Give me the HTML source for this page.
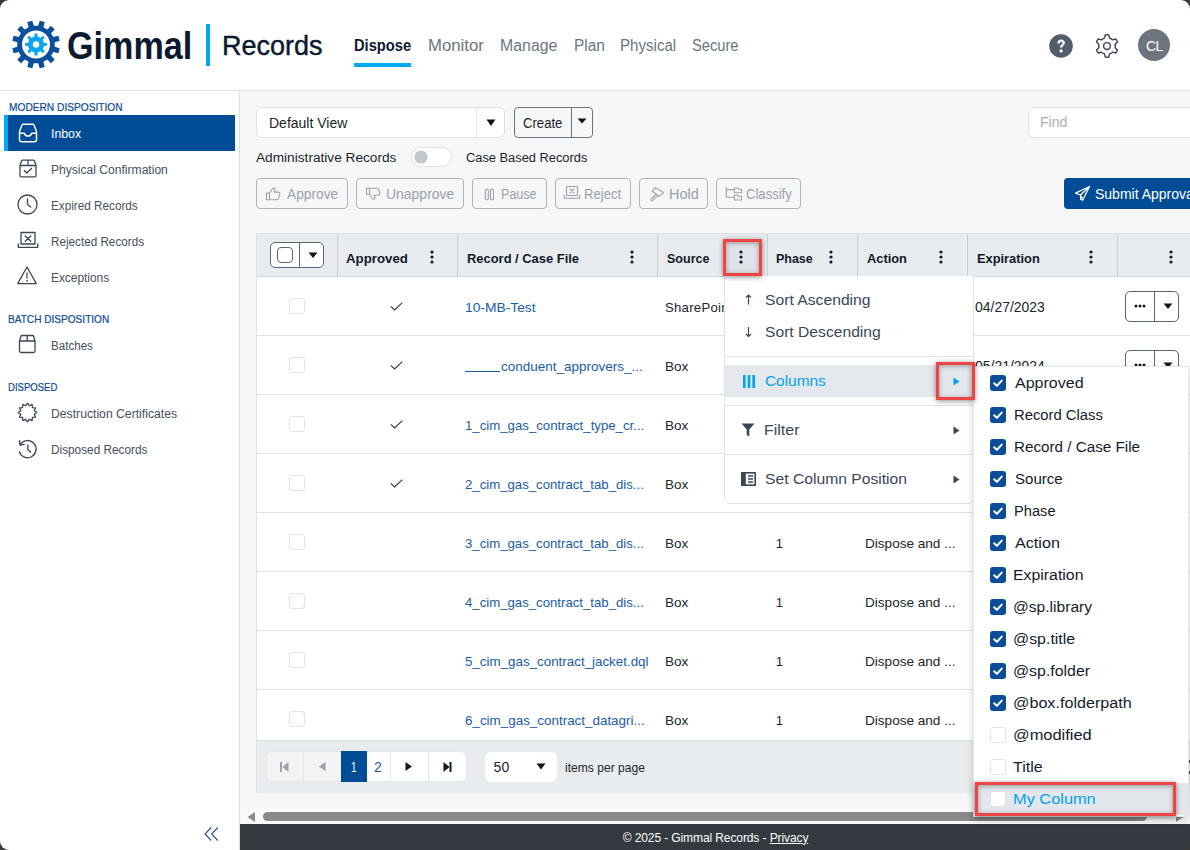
<!DOCTYPE html>
<html><head><meta charset="utf-8">
<style>
*{box-sizing:border-box;margin:0;padding:0}
html,body{width:1190px;height:850px;overflow:hidden;background:#393939;font-family:"Liberation Sans",sans-serif}
#app{position:absolute;left:0;top:0;width:1190px;height:850px;overflow:hidden;border-radius:9px;background:transparent}
.t{position:absolute;white-space:nowrap;line-height:1}
.r{position:absolute;box-sizing:border-box}
</style></head><body><div id="app">
<div class="r" style="left:0px;top:0px;width:1190px;height:824px;background:#fff"></div>
<div class="r" style="left:0px;top:824px;width:240px;height:26px;background:#fff"></div>
<div class="r" style="left:0px;top:90px;width:1190px;height:1px;background:#dde1e6"></div>
<div class="r" style="left:239px;top:91px;width:1px;height:759px;background:#dde1e6"></div>
<div class="r" style="left:240px;top:91px;width:950px;height:733px;background:#f6f7f9"></div>
<div class="r" style="left:240px;top:824px;width:950px;height:26px;background:#343a40"></div>
<svg class="r" style="left:0px;top:0px;" width="80" height="90" viewBox="0 0 80 90"><path d="M54.67,46.71 L59.71,48.19 L58.38,53.16 L53.27,51.92 L51.06,55.75 L54.69,59.55 L51.05,63.19 L47.25,59.56 L43.42,61.77 L44.66,66.88 L39.69,68.21 L38.21,63.17 L33.79,63.17 L32.31,68.21 L27.34,66.88 L28.58,61.77 L24.75,59.56 L20.95,63.19 L17.31,59.55 L20.94,55.75 L18.73,51.92 L13.62,53.16 L12.29,48.19 L17.33,46.71 L17.33,42.29 L12.29,40.81 L13.62,35.84 L18.73,37.08 L20.94,33.25 L17.31,29.45 L20.95,25.81 L24.75,29.44 L28.58,27.23 L27.34,22.12 L32.31,20.79 L33.79,25.83 L38.21,25.83 L39.69,20.79 L44.66,22.12 L43.42,27.23 L47.25,29.44 L51.05,25.81 L54.69,29.45 L51.06,33.25 L53.27,37.08 L58.38,35.84 L59.71,40.81 L54.67,42.29Z" fill="#0a4f9c"/><circle cx="36" cy="44.5" r="14" fill="#fff"/><path d="M44.05,42.93 L46.90,42.99 L46.90,46.01 L44.05,46.07 L42.80,49.08 L44.77,51.14 L42.64,53.27 L40.58,51.30 L37.57,52.55 L37.51,55.40 L34.49,55.40 L34.43,52.55 L31.42,51.30 L29.36,53.27 L27.23,51.14 L29.20,49.08 L27.95,46.07 L25.10,46.01 L25.10,42.99 L27.95,42.93 L29.20,39.92 L27.23,37.86 L29.36,35.73 L31.42,37.70 L34.43,36.45 L34.49,33.60 L37.51,33.60 L37.57,36.45 L40.58,37.70 L42.64,35.73 L44.77,37.86 L42.80,39.92Z M39.2,44.5 A3.2,3.2 0 1,0 32.8,44.5 A3.2,3.2 0 1,0 39.2,44.5Z" fill="#0aa6f0" fill-rule="evenodd"/></svg>
<div class="t " style="left:67.30px;top:26.50px;font-size:38px;color:#0c1a30;font-weight:bold;;transform:scaleX(0.8982);transform-origin:0 0">Gimmal</div>
<div class="r" style="left:206px;top:24px;width:4px;height:42px;background:#00a9f4"></div>
<div class="t " style="left:221.50px;top:33.00px;font-size:27px;color:#0c1a30;font-weight:normal;-webkit-text-stroke:0.45px #0c1a30;transform:scaleX(0.9996);transform-origin:0 0">Records</div>
<div class="t " style="left:353.98px;top:37.70px;font-size:16px;color:#0c1a30;font-weight:bold;;transform:scaleX(0.9178);transform-origin:0 0">Dispose</div>
<div class="r" style="left:354px;top:63px;width:57px;height:4px;background:#00a9f4"></div>
<div class="t " style="left:427.55px;top:37.70px;font-size:16px;color:#6c757d;font-weight:normal;;transform:scaleX(1.0467);transform-origin:0 0">Monitor</div>
<div class="t " style="left:500.31px;top:37.70px;font-size:16px;color:#6c757d;font-weight:normal;;transform:scaleX(0.9926);transform-origin:0 0">Manage</div>
<div class="t " style="left:573.74px;top:37.70px;font-size:16px;color:#6c757d;font-weight:normal;;transform:scaleX(0.9627);transform-origin:0 0">Plan</div>
<div class="t " style="left:619.66px;top:37.70px;font-size:16px;color:#6c757d;font-weight:normal;;transform:scaleX(0.9427);transform-origin:0 0">Physical</div>
<div class="t " style="left:692.30px;top:37.70px;font-size:16px;color:#6c757d;font-weight:normal;;transform:scaleX(0.9174);transform-origin:0 0">Secure</div>
<svg class="r" style="left:1049px;top:34px;" width="24" height="24" viewBox="0 0 24 24"><circle cx="12" cy="12" r="11.8" fill="#535c6b"/><path d="M8.3,9.6 C8.3,6.9 10,5.6 12.1,5.6 C14.3,5.6 15.9,7 15.9,9 C15.9,11.2 13.3,11.6 13.3,13.6 L10.9,13.6 C10.9,10.9 13.4,10.7 13.4,9.1 C13.4,8.3 12.9,7.8 12.1,7.8 C11.2,7.8 10.8,8.5 10.8,9.6Z" fill="#fff"/><circle cx="12.1" cy="16.9" r="1.6" fill="#fff"/></svg>
<svg class="r" style="left:1094px;top:33px;" width="26" height="26" viewBox="0 0 26 26"><path d="M10.44,5.11 L11.25,1.94 A11.2,11.2 0 0,1 14.75,1.94 L15.56,5.11 A8.3,8.3 0 0,1 18.55,6.83 L21.70,5.95 A11.2,11.2 0 0,1 23.46,8.99 L21.12,11.27 A8.3,8.3 0 0,1 21.12,14.73 L23.46,17.01 A11.2,11.2 0 0,1 21.70,20.05 L18.55,19.17 A8.3,8.3 0 0,1 15.56,20.89 L14.75,24.06 A11.2,11.2 0 0,1 11.25,24.06 L10.44,20.89 A8.3,8.3 0 0,1 7.45,19.17 L4.30,20.05 A11.2,11.2 0 0,1 2.54,17.01 L4.88,14.73 A8.3,8.3 0 0,1 4.88,11.27 L2.54,8.99 A11.2,11.2 0 0,1 4.30,5.95 L7.45,6.83 A8.3,8.3 0 0,1 10.44,5.11 Z" fill="none" stroke="#3d4756" stroke-width="1.45" stroke-linejoin="round"/><circle cx="13" cy="13" r="3.4" fill="none" stroke="#3d4756" stroke-width="1.45"/></svg>
<div class="r" style="left:1138px;top:29px;width:32px;height:32px;background:#6c757d;border-radius:50%"></div>
<div class="t " style="left:1146.00px;top:38.60px;font-size:14px;color:#fff;font-weight:normal;letter-spacing:-0.5px">CL</div>
<div class="t " style="left:8.90px;top:101.60px;font-size:10.6px;color:#0d4a96;font-weight:normal;-webkit-text-stroke:0.2px #0d4a96;transform:scaleX(0.9604);transform-origin:0 0">MODERN DISPOSITION</div>
<div class="r" style="left:4px;top:115px;width:231px;height:36px;background:#004c97"></div>
<div class="r" style="left:4px;top:115px;width:4px;height:36px;background:#00a9f4"></div>
<div class="t " style="left:51.40px;top:127.85px;font-size:12.3px;color:#fff;font-weight:normal;;transform:scaleX(0.9989);transform-origin:0 0">Inbox</div>
<div class="t " style="left:51.42px;top:163.85px;font-size:12.3px;color:#46505e;font-weight:normal;;transform:scaleX(0.9824);transform-origin:0 0">Physical Confirmation</div>
<div class="t " style="left:51.45px;top:199.85px;font-size:12.3px;color:#46505e;font-weight:normal;;transform:scaleX(0.9537);transform-origin:0 0">Expired Records</div>
<div class="t " style="left:51.45px;top:235.85px;font-size:12.3px;color:#46505e;font-weight:normal;;transform:scaleX(0.9514);transform-origin:0 0">Rejected Records</div>
<div class="t " style="left:51.43px;top:271.85px;font-size:12.3px;color:#46505e;font-weight:normal;;transform:scaleX(0.9661);transform-origin:0 0">Exceptions</div>
<div class="t " style="left:8.40px;top:313.70px;font-size:10.6px;color:#0d4a96;font-weight:normal;-webkit-text-stroke:0.2px #0d4a96;transform:scaleX(0.9518);transform-origin:0 0">BATCH DISPOSITION</div>
<div class="t " style="left:51.46px;top:339.65px;font-size:12.3px;color:#46505e;font-weight:normal;;transform:scaleX(0.9426);transform-origin:0 0">Batches</div>
<div class="t " style="left:8.40px;top:381.70px;font-size:10.6px;color:#0d4a96;font-weight:normal;-webkit-text-stroke:0.2px #0d4a96;transform:scaleX(0.9002);transform-origin:0 0">DISPOSED</div>
<div class="t " style="left:51.41px;top:407.65px;font-size:12.3px;color:#46505e;font-weight:normal;;transform:scaleX(0.9916);transform-origin:0 0">Destruction Certificates</div>
<div class="t " style="left:51.44px;top:443.85px;font-size:12.3px;color:#46505e;font-weight:normal;;transform:scaleX(0.9595);transform-origin:0 0">Disposed Records</div>
<svg class="r" style="left:17px;top:123px;" width="22" height="20" viewBox="0 0 22 20"><path d="M2.5,8.5 L5,2 Q5.3,1.3 6,1.3 L16,1.3 Q16.7,1.3 17,2 L19.5,8.5 L19.5,17 Q19.5,18.7 17.8,18.7 L4.2,18.7 Q2.5,18.7 2.5,17Z M2.5,10.2 L7.3,10.2 Q8,13 11,13 Q14,13 14.7,10.2 L19.5,10.2" fill="none" stroke="#fff" stroke-width="1.5" stroke-linecap="round" stroke-linejoin="round"/></svg>
<svg class="r" style="left:18px;top:159px;" width="20" height="19" viewBox="0 0 20 19"><path d="M2,6.5 L2,16.5 Q2,17.8 3.3,17.8 L16.7,17.8 Q18,17.8 18,16.5 L18,6.5 Z M2,6.5 L3.5,2 Q3.8,1.2 4.6,1.2 L15.4,1.2 Q16.2,1.2 16.5,2 L18,6.5 M10,1.2 L10,6.5 M6.3,11.5 L8.8,14 L13.7,9.2" fill="none" stroke="#3d4756" stroke-width="1.3" stroke-linecap="round" stroke-linejoin="round"/></svg>
<svg class="r" style="left:17.3px;top:193.8px;" width="21" height="21" viewBox="0 0 21 21"><circle cx="10.5" cy="10.5" r="9.5" fill="none" stroke="#3d4756" stroke-width="1.3" stroke-linecap="round" stroke-linejoin="round"/><path d="M10.5,4.8 L10.5,10.5 L13.8,13" fill="none" stroke="#3d4756" stroke-width="1.3" stroke-linecap="round" stroke-linejoin="round"/></svg>
<svg class="r" style="left:15.5px;top:231px;" width="24" height="18" viewBox="0 0 24 18"><path d="M5,1.5 L19,1.5 L19,13 L5,13 Z M2.3,13 L2.3,16.3 L21.7,16.3 L21.7,13 M9.2,5 L14.8,10.2 M14.8,5 L9.2,10.2" fill="none" stroke="#3d4756" stroke-width="1.3" stroke-linecap="round" stroke-linejoin="round"/></svg>
<svg class="r" style="left:16px;top:265px;" width="22" height="21" viewBox="0 0 22 21"><path d="M11,2 L20.3,18.6 L1.7,18.6 Z" fill="none" stroke="#3d4756" stroke-width="1.3" stroke-linecap="round" stroke-linejoin="round"/><path d="M11,8 L11,13" fill="none" stroke="#3d4756" stroke-width="1.3" stroke-linecap="round" stroke-linejoin="round"/><circle cx="11" cy="15.8" r="0.9" fill="#3d4756"/></svg>
<svg class="r" style="left:17px;top:334px;" width="22" height="20" viewBox="0 0 22 20"><path d="M2.5,7 L2.5,17 Q2.5,18.5 4,18.5 L16.5,18.5 Q18,18.5 18,17 L18,7 Z M2.5,7 L3.8,2.5 Q4.1,1.5 5,1.5 L15.5,1.5 Q16.4,1.5 16.7,2.5 L18,7 M10.25,1.5 L10.25,7" fill="none" stroke="#3d4756" stroke-width="1.3" stroke-linecap="round" stroke-linejoin="round"/></svg>
<svg class="r" style="left:17px;top:402px;" width="21" height="21" viewBox="0 0 21 21"><path d="M10.50,1.20 L12.31,3.74 L15.15,2.45 L15.45,5.55 L18.55,5.85 L17.26,8.69 L19.80,10.50 L17.26,12.31 L18.55,15.15 L15.45,15.45 L15.15,18.55 L12.31,17.26 L10.50,19.80 L8.69,17.26 L5.85,18.55 L5.55,15.45 L2.45,15.15 L3.74,12.31 L1.20,10.50 L3.74,8.69 L2.45,5.85 L5.55,5.55 L5.85,2.45 L8.69,3.74Z" fill="none" stroke="#3d4756" stroke-width="1.3" stroke-linecap="round" stroke-linejoin="round"/></svg>
<svg class="r" style="left:16px;top:438px;" width="22" height="22" viewBox="0 0 22 22"><path d="M4.2,6.5 A8.6,8.6 0 1,1 3.3,13.8" fill="none" stroke="#3d4756" stroke-width="1.3" stroke-linecap="round" stroke-linejoin="round"/><path d="M3.6,2.6 L3.9,7 L8.2,6.4" fill="none" stroke="#3d4756" stroke-width="1.3" stroke-linecap="round" stroke-linejoin="round"/><path d="M11.8,7 L11.8,11.5 L14.5,14" fill="none" stroke="#3d4756" stroke-width="1.3" stroke-linecap="round" stroke-linejoin="round"/></svg>
<svg class="r" style="left:203px;top:826px;" width="17" height="16" viewBox="0 0 17 16"><path d="M8.2,1.5 L2,8 L8.2,14.5 M14.8,1.5 L8.6,8 L14.8,14.5" fill="none" stroke="#2f4f86" stroke-width="1.1"/></svg>
<div class="r" style="left:256px;top:107px;width:249px;height:31px;background:#fff;border:1px solid #dee2e6;border-radius:6px"></div>
<div class="r" style="left:476px;top:108px;width:1px;height:29px;background:#e3e6ea"></div>
<svg class="r" style="left:486px;top:119px;" width="10" height="8" viewBox="0 0 10 8"><path d="M0.5,0.5 L9.5,0.5 L5,7Z" fill="#0c1420"/></svg>
<div class="t " style="left:268.79px;top:117.10px;font-size:13.8px;color:#212529;font-weight:normal;;transform:scaleX(1.0139);transform-origin:0 0">Default View</div>
<div class="r" style="left:514px;top:107px;width:79px;height:31px;border:1px solid #6c757d;border-radius:4px;background:#f6f7f9"></div>
<div class="r" style="left:571px;top:108px;width:1px;height:29px;background:#6c757d"></div>
<svg class="r" style="left:577px;top:118px;" width="10" height="7" viewBox="0 0 10 7"><path d="M0.5,0.5 L9.5,0.5 L5,5.5Z" fill="#0c1420"/></svg>
<div class="t " style="left:523.30px;top:117.20px;font-size:13.8px;color:#212529;font-weight:normal;;transform:scaleX(0.9512);transform-origin:0 0">Create</div>
<div class="t " style="left:256.40px;top:151.25px;font-size:13.7px;color:#212529;font-weight:normal;;transform:scaleX(0.9980);transform-origin:0 0">Administrative Records</div>
<div class="r" style="left:411px;top:147px;width:41px;height:20px;background:#fff;border:1px solid #dee2e6;border-radius:10px"></div>
<svg class="r" style="left:414px;top:150px;" width="14" height="14" viewBox="0 0 14 14"><circle cx="7" cy="7" r="6.6" fill="#c3c6cc"/></svg>
<div class="t " style="left:465.50px;top:151.05px;font-size:13.7px;color:#212529;font-weight:normal;;transform:scaleX(0.9383);transform-origin:0 0">Case Based Records</div>
<div class="r" style="left:256px;top:178px;width:92px;height:31px;border:1px solid #adb3b9;border-radius:4px"></div>
<div class="t " style="left:287.10px;top:187.00px;font-size:14px;color:#9aa1a8;font-weight:normal;;transform:scaleX(0.9817);transform-origin:0 0">Approve</div>
<div class="r" style="left:356px;top:178px;width:108px;height:31px;border:1px solid #adb3b9;border-radius:4px"></div>
<div class="t " style="left:385.80px;top:187.00px;font-size:14px;color:#9aa1a8;font-weight:normal;;transform:scaleX(0.9970);transform-origin:0 0">Unapprove</div>
<div class="r" style="left:472px;top:178px;width:75px;height:31px;border:1px solid #adb3b9;border-radius:4px"></div>
<div class="t " style="left:501.10px;top:187.00px;font-size:14px;color:#9aa1a8;font-weight:normal;;transform:scaleX(0.8969);transform-origin:0 0">Pause</div>
<div class="r" style="left:555px;top:178px;width:76px;height:31px;border:1px solid #adb3b9;border-radius:4px"></div>
<div class="t " style="left:584.36px;top:187.00px;font-size:14px;color:#9aa1a8;font-weight:normal;;transform:scaleX(0.9357);transform-origin:0 0">Reject</div>
<div class="r" style="left:639px;top:178px;width:69px;height:31px;border:1px solid #adb3b9;border-radius:4px"></div>
<div class="t " style="left:669.26px;top:187.00px;font-size:14px;color:#9aa1a8;font-weight:normal;;transform:scaleX(1.0405);transform-origin:0 0">Hold</div>
<div class="r" style="left:716px;top:178px;width:85px;height:31px;border:1px solid #adb3b9;border-radius:4px"></div>
<div class="t " style="left:746.20px;top:187.00px;font-size:14px;color:#9aa1a8;font-weight:normal;;transform:scaleX(0.9346);transform-origin:0 0">Classify</div>
<svg class="r" style="left:265px;top:186px;" width="18" height="16" viewBox="0 0 18 16"><path d="M1.5,7 L4.5,7 L4.5,13.8 L1.5,13.8Z M4.5,7.3 L7.3,3 Q8.3,1.5 9.5,2.3 Q10.3,3 9.8,4.3 L9.1,6.1 L13.4,6.1 Q15.1,6.3 14.8,7.9 L13.8,11.8 Q13.3,13.8 12,13.8 L4.5,13.8" fill="none" stroke="#9aa1a8" stroke-width="1.1" stroke-linejoin="round" stroke-linecap="round"/></svg>
<svg class="r" style="left:365px;top:187px;" width="18" height="15" viewBox="0 0 18 15"><path d="M1.5,7.3 L4.5,7.3 L4.5,1.3 L1.5,1.3Z M4.5,7 L7.3,11.3 Q8.3,12.8 9.5,12 Q10.3,11.3 9.8,10 L9.1,8.2 L13.4,8.2 Q15.1,8 14.8,6.4 L13.8,2.5 Q13.3,1.3 12,1.3 L4.5,1.3" fill="none" stroke="#9aa1a8" stroke-width="1.1" stroke-linejoin="round" stroke-linecap="round"/></svg>
<svg class="r" style="left:484px;top:188px;" width="11" height="13" viewBox="0 0 11 13"><rect x="1.3" y="1.2" width="3" height="10.5" rx="1" fill="none" stroke="#9aa1a8" stroke-width="1.1" stroke-linejoin="round" stroke-linecap="round"/><rect x="6.5" y="1.2" width="3" height="10.5" rx="1" fill="none" stroke="#9aa1a8" stroke-width="1.1" stroke-linejoin="round" stroke-linecap="round"/></svg>
<svg class="r" style="left:563px;top:185px;" width="18" height="15" viewBox="0 0 18 15"><path d="M3.5,1.5 L14.5,1.5 L14.5,10.5 L3.5,10.5Z M1.3,10.5 L1.3,13.3 L16.7,13.3 L16.7,10.5 M7,4 L11,8 M11,4 L7,8" fill="none" stroke="#9aa1a8" stroke-width="1.1" stroke-linejoin="round" stroke-linecap="round"/></svg>
<svg class="r" style="left:640px;top:180px;" width="30" height="30" viewBox="640 180 30 30"><path d="M655.2,187.8 L663.6,192.6 L659.4,196.4 L652.2,191.2Z M656.5,194 L651.2,199 Q650.4,200 651.2,200.6 Q652,201.2 652.8,200.4 L658,195.2" fill="none" stroke="#9aa1a8" stroke-width="1.1" stroke-linejoin="round" stroke-linecap="round"/></svg>
<svg class="r" style="left:720px;top:180px;" width="30" height="30" viewBox="720 180 30 30"><path d="M726.3,187.4 L726.3,197.3 L733.3,197.3 M726.3,189.6 L733.3,189.6 M734.4,188 L737.6,188 L738.6,189.2 L741.6,189.2 L741.6,192.7 L734.4,192.7Z M734.4,195 L737.6,195 L738.6,196.2 L741.6,196.2 L741.6,200 L734.4,200Z" fill="none" stroke="#9aa1a8" stroke-width="1.1" stroke-linejoin="round" stroke-linecap="round"/></svg>
<div class="r" style="left:1028px;top:107px;width:170px;height:31px;background:#fff;border:1px solid #dee2e6;border-radius:6px"></div>
<div class="t " style="left:1040.39px;top:115.40px;font-size:14px;color:#a9b0b8;font-weight:normal;;transform:scaleX(1.0060);transform-origin:0 0">Find</div>
<div class="r" style="left:1064px;top:178px;width:140px;height:31px;background:#004c97;border-radius:4px"></div>
<svg class="r" style="left:1074px;top:185px;" width="17" height="17" viewBox="0 0 17 17"><path d="M15.5,1.5 L1.5,8.2 L6.5,10 L8.5,15.5 L15.5,1.5Z M6.5,10 L15.5,1.5 M6.5,10 L6.8,14.5 L8.5,12" fill="none" stroke="#fff" stroke-width="1.3" stroke-linejoin="round"/></svg>
<div class="t " style="left:1095.00px;top:186.60px;font-size:14px;color:#fff;font-weight:normal;">Submit Approval</div>
<div class="r" style="left:256px;top:233px;width:940px;height:560px;background:#fff;border:1px solid #dee2e6;border-right:none"></div>
<div class="r" style="left:257px;top:234px;width:940px;height:42px;background:#e9ecef"></div>
<div class="r" style="left:257px;top:276px;width:940px;height:1px;background:#d5d9de"></div>
<div class="r" style="left:337px;top:234px;width:1px;height:42px;background:#c9ced4"></div>
<div class="r" style="left:457px;top:234px;width:1px;height:42px;background:#c9ced4"></div>
<div class="r" style="left:657px;top:234px;width:1px;height:42px;background:#c9ced4"></div>
<div class="r" style="left:767px;top:234px;width:1px;height:42px;background:#c9ced4"></div>
<div class="r" style="left:857px;top:234px;width:1px;height:42px;background:#c9ced4"></div>
<div class="r" style="left:967px;top:234px;width:1px;height:42px;background:#c9ced4"></div>
<div class="r" style="left:1117px;top:234px;width:1px;height:42px;background:#c9ced4"></div>
<div class="r" style="left:270px;top:242px;width:54px;height:26px;background:#fff;border:1px solid #5d6670;border-radius:5px"></div>
<div class="r" style="left:299px;top:243px;width:1px;height:24px;background:#5d6670"></div>
<div class="r" style="left:277px;top:247px;width:16px;height:16px;border:1px solid #5d6670;border-radius:4px"></div>
<svg class="r" style="left:308px;top:252px;" width="10" height="7" viewBox="0 0 10 7"><path d="M0.5,0.5 L9.5,0.5 L5,6Z" fill="#0c1420"/></svg>
<div class="t " style="left:346.10px;top:252.00px;font-size:13px;color:#10192a;font-weight:bold;;transform:scaleX(1.0193);transform-origin:0 0">Approved</div>
<svg class="r" style="left:428.5px;top:249px;" width="6" height="16" viewBox="0 0 6 16"><circle cx="3" cy="3" r="1.6" fill="#10192a"/><circle cx="3" cy="8" r="1.6" fill="#10192a"/><circle cx="3" cy="13" r="1.6" fill="#10192a"/></svg>
<div class="t " style="left:466.70px;top:252.00px;font-size:13px;color:#10192a;font-weight:bold;;transform:scaleX(0.9940);transform-origin:0 0">Record / Case File</div>
<svg class="r" style="left:628.5px;top:249px;" width="6" height="16" viewBox="0 0 6 16"><circle cx="3" cy="3" r="1.6" fill="#10192a"/><circle cx="3" cy="8" r="1.6" fill="#10192a"/><circle cx="3" cy="13" r="1.6" fill="#10192a"/></svg>
<div class="t " style="left:666.50px;top:252.00px;font-size:13px;color:#10192a;font-weight:bold;;transform:scaleX(0.9626);transform-origin:0 0">Source</div>
<svg class="r" style="left:738.2px;top:249px;" width="6" height="16" viewBox="0 0 6 16"><circle cx="3" cy="3" r="1.6" fill="#10192a"/><circle cx="3" cy="8" r="1.6" fill="#10192a"/><circle cx="3" cy="13" r="1.6" fill="#10192a"/></svg>
<div class="t " style="left:776.40px;top:252.00px;font-size:13px;color:#10192a;font-weight:bold;;transform:scaleX(0.9587);transform-origin:0 0">Phase</div>
<svg class="r" style="left:828.4px;top:249px;" width="6" height="16" viewBox="0 0 6 16"><circle cx="3" cy="3" r="1.6" fill="#10192a"/><circle cx="3" cy="8" r="1.6" fill="#10192a"/><circle cx="3" cy="13" r="1.6" fill="#10192a"/></svg>
<div class="t " style="left:866.60px;top:252.00px;font-size:13px;color:#10192a;font-weight:bold;;transform:scaleX(0.9877);transform-origin:0 0">Action</div>
<svg class="r" style="left:938.4px;top:249px;" width="6" height="16" viewBox="0 0 6 16"><circle cx="3" cy="3" r="1.6" fill="#10192a"/><circle cx="3" cy="8" r="1.6" fill="#10192a"/><circle cx="3" cy="13" r="1.6" fill="#10192a"/></svg>
<div class="t " style="left:976.60px;top:252.00px;font-size:13px;color:#10192a;font-weight:bold;;transform:scaleX(0.9870);transform-origin:0 0">Expiration</div>
<svg class="r" style="left:1088.4px;top:249px;" width="6" height="16" viewBox="0 0 6 16"><circle cx="3" cy="3" r="1.6" fill="#10192a"/><circle cx="3" cy="8" r="1.6" fill="#10192a"/><circle cx="3" cy="13" r="1.6" fill="#10192a"/></svg>
<svg class="r" style="left:1168.4px;top:249px;" width="6" height="16" viewBox="0 0 6 16"><circle cx="3" cy="3" r="1.6" fill="#10192a"/><circle cx="3" cy="8" r="1.6" fill="#10192a"/><circle cx="3" cy="13" r="1.6" fill="#10192a"/></svg>
<div class="r" style="left:289px;top:298px;width:16px;height:16px;border:1px solid #dfe3e8;border-radius:3px;background:#fff"></div>
<svg class="r" style="left:389px;top:301px;" width="15" height="11" viewBox="0 0 15 11"><path d="M1.8,5.3 L5.6,9 L13.3,1.7" fill="none" stroke="#2a323e" stroke-width="1.05"/></svg>
<div class="t " style="left:464.55px;top:300.95px;font-size:13.1px;color:#1a5ca6;font-weight:normal;;transform:scaleX(1.0543);transform-origin:0 0">10-MB-Test</div>
<div class="t " style="left:665.00px;top:300.95px;font-size:13.1px;color:#212529;font-weight:normal;letter-spacing:0.3px">SharePoint</div>
<div class="t " style="left:975.40px;top:300.00px;font-size:14px;color:#212529;font-weight:normal;;transform:scaleX(0.9960);transform-origin:0 0">04/27/2023</div>
<div class="r" style="left:1125px;top:291px;width:54px;height:31px;background:#fff;border:1px solid #5d6670;border-radius:5px"></div>
<div class="r" style="left:1154px;top:292px;width:1px;height:29px;background:#5d6670"></div>
<svg class="r" style="left:1134px;top:304px;" width="12" height="4" viewBox="0 0 12 4"><circle cx="2" cy="2" r="1.5" fill="#10192a"/><circle cx="6" cy="2" r="1.5" fill="#10192a"/><circle cx="10" cy="2" r="1.5" fill="#10192a"/></svg>
<svg class="r" style="left:1163px;top:303px;" width="10" height="7" viewBox="0 0 10 7"><path d="M0.5,0.5 L9.5,0.5 L5,6Z" fill="#0c1420"/></svg>
<div class="r" style="left:257px;top:335px;width:940px;height:1px;background:#dee2e6"></div>
<div class="r" style="left:289px;top:357px;width:16px;height:16px;border:1px solid #dfe3e8;border-radius:3px;background:#fff"></div>
<svg class="r" style="left:389px;top:360px;" width="15" height="11" viewBox="0 0 15 11"><path d="M1.8,5.3 L5.6,9 L13.3,1.7" fill="none" stroke="#2a323e" stroke-width="1.05"/></svg>
<div class="r" style="left:465px;top:370.5px;width:35px;height:1.2px;background:#1a5ca6"></div>
<div class="t " style="left:500.80px;top:359.95px;font-size:13.1px;color:#1a5ca6;font-weight:normal;;transform:scaleX(1.0311);transform-origin:0 0">conduent_approvers_...</div>
<div class="t " style="left:664.97px;top:359.95px;font-size:13.1px;color:#212529;font-weight:normal;;transform:scaleX(1.0311);transform-origin:0 0">Box</div>
<div class="t " style="left:975.40px;top:359.00px;font-size:14px;color:#212529;font-weight:normal;;transform:scaleX(0.9960);transform-origin:0 0">05/21/2024</div>
<div class="r" style="left:1125px;top:350px;width:54px;height:31px;background:#fff;border:1px solid #5d6670;border-radius:5px"></div>
<div class="r" style="left:1154px;top:351px;width:1px;height:29px;background:#5d6670"></div>
<svg class="r" style="left:1134px;top:363px;" width="12" height="4" viewBox="0 0 12 4"><circle cx="2" cy="2" r="1.5" fill="#10192a"/><circle cx="6" cy="2" r="1.5" fill="#10192a"/><circle cx="10" cy="2" r="1.5" fill="#10192a"/></svg>
<svg class="r" style="left:1163px;top:362px;" width="10" height="7" viewBox="0 0 10 7"><path d="M0.5,0.5 L9.5,0.5 L5,6Z" fill="#0c1420"/></svg>
<div class="r" style="left:257px;top:394px;width:940px;height:1px;background:#dee2e6"></div>
<div class="r" style="left:289px;top:416px;width:16px;height:16px;border:1px solid #dfe3e8;border-radius:3px;background:#fff"></div>
<svg class="r" style="left:389px;top:419px;" width="15" height="11" viewBox="0 0 15 11"><path d="M1.8,5.3 L5.6,9 L13.3,1.7" fill="none" stroke="#2a323e" stroke-width="1.05"/></svg>
<div class="t " style="left:464.59px;top:418.95px;font-size:13.1px;color:#1a5ca6;font-weight:normal;;transform:scaleX(1.0094);transform-origin:0 0">1_cim_gas_contract_type_cr...</div>
<div class="t " style="left:664.97px;top:418.95px;font-size:13.1px;color:#212529;font-weight:normal;;transform:scaleX(1.0311);transform-origin:0 0">Box</div>
<div class="r" style="left:257px;top:453px;width:940px;height:1px;background:#dee2e6"></div>
<div class="r" style="left:289px;top:475px;width:16px;height:16px;border:1px solid #dfe3e8;border-radius:3px;background:#fff"></div>
<svg class="r" style="left:389px;top:478px;" width="15" height="11" viewBox="0 0 15 11"><path d="M1.8,5.3 L5.6,9 L13.3,1.7" fill="none" stroke="#2a323e" stroke-width="1.05"/></svg>
<div class="t " style="left:464.60px;top:477.95px;font-size:13.1px;color:#1a5ca6;font-weight:normal;;transform:scaleX(1.0070);transform-origin:0 0">2_cim_gas_contract_tab_dis...</div>
<div class="t " style="left:664.97px;top:477.95px;font-size:13.1px;color:#212529;font-weight:normal;;transform:scaleX(1.0311);transform-origin:0 0">Box</div>
<div class="r" style="left:257px;top:512px;width:940px;height:1px;background:#dee2e6"></div>
<div class="r" style="left:289px;top:534px;width:16px;height:16px;border:1px solid #dfe3e8;border-radius:3px;background:#fff"></div>
<div class="t " style="left:464.60px;top:536.95px;font-size:13.1px;color:#1a5ca6;font-weight:normal;;transform:scaleX(1.0070);transform-origin:0 0">3_cim_gas_contract_tab_dis...</div>
<div class="t " style="left:664.97px;top:536.95px;font-size:13.1px;color:#212529;font-weight:normal;;transform:scaleX(1.0311);transform-origin:0 0">Box</div>
<div class="t " style="left:775.80px;top:536.95px;font-size:13.1px;color:#212529;font-weight:normal;">1</div>
<div class="t " style="left:864.86px;top:536.95px;font-size:13.1px;color:#212529;font-weight:normal;;transform:scaleX(1.0361);transform-origin:0 0">Dispose and ...</div>
<div class="r" style="left:257px;top:571px;width:940px;height:1px;background:#dee2e6"></div>
<div class="r" style="left:289px;top:593px;width:16px;height:16px;border:1px solid #dfe3e8;border-radius:3px;background:#fff"></div>
<div class="t " style="left:464.60px;top:595.95px;font-size:13.1px;color:#1a5ca6;font-weight:normal;;transform:scaleX(1.0070);transform-origin:0 0">4_cim_gas_contract_tab_dis...</div>
<div class="t " style="left:664.97px;top:595.95px;font-size:13.1px;color:#212529;font-weight:normal;;transform:scaleX(1.0311);transform-origin:0 0">Box</div>
<div class="t " style="left:775.80px;top:595.95px;font-size:13.1px;color:#212529;font-weight:normal;">1</div>
<div class="t " style="left:864.86px;top:595.95px;font-size:13.1px;color:#212529;font-weight:normal;;transform:scaleX(1.0361);transform-origin:0 0">Dispose and ...</div>
<div class="r" style="left:257px;top:630px;width:940px;height:1px;background:#dee2e6"></div>
<div class="r" style="left:289px;top:652px;width:16px;height:16px;border:1px solid #dfe3e8;border-radius:3px;background:#fff"></div>
<div class="t " style="left:464.60px;top:654.95px;font-size:13.1px;color:#1a5ca6;font-weight:normal;;transform:scaleX(1.0207);transform-origin:0 0">5_cim_gas_contract_jacket.dql</div>
<div class="t " style="left:664.97px;top:654.95px;font-size:13.1px;color:#212529;font-weight:normal;;transform:scaleX(1.0311);transform-origin:0 0">Box</div>
<div class="t " style="left:775.80px;top:654.95px;font-size:13.1px;color:#212529;font-weight:normal;">1</div>
<div class="t " style="left:864.86px;top:654.95px;font-size:13.1px;color:#212529;font-weight:normal;;transform:scaleX(1.0361);transform-origin:0 0">Dispose and ...</div>
<div class="r" style="left:257px;top:689px;width:940px;height:1px;background:#dee2e6"></div>
<div class="r" style="left:289px;top:711px;width:16px;height:16px;border:1px solid #dfe3e8;border-radius:3px;background:#fff"></div>
<div class="t " style="left:464.60px;top:713.95px;font-size:13.1px;color:#1a5ca6;font-weight:normal;;transform:scaleX(1.0242);transform-origin:0 0">6_cim_gas_contract_datagri...</div>
<div class="t " style="left:664.97px;top:713.95px;font-size:13.1px;color:#212529;font-weight:normal;;transform:scaleX(1.0311);transform-origin:0 0">Box</div>
<div class="t " style="left:775.80px;top:713.95px;font-size:13.1px;color:#212529;font-weight:normal;">1</div>
<div class="t " style="left:864.86px;top:713.95px;font-size:13.1px;color:#212529;font-weight:normal;;transform:scaleX(1.0361);transform-origin:0 0">Dispose and ...</div>
<div class="r" style="left:257px;top:740px;width:940px;height:53px;background:#e9ecef;border-top:1px solid #dee2e6"></div>
<div class="r" style="left:266px;top:751px;width:201px;height:31px;background:#fff;border:1px solid #e2e5e9;border-radius:6px;overflow:hidden"></div>
<div class="r" style="left:267px;top:752px;width:74px;height:29px;background:#f1f3f5;border-radius:5px 0 0 5px"></div>
<div class="r" style="left:303px;top:752px;width:1px;height:29px;background:#e2e5e9"></div>
<div class="r" style="left:390px;top:752px;width:1px;height:29px;background:#e2e5e9"></div>
<div class="r" style="left:428px;top:752px;width:1px;height:29px;background:#e2e5e9"></div>
<div class="r" style="left:341px;top:751px;width:26px;height:31px;background:#004c97"></div>
<svg class="r" style="left:280px;top:762px;" width="9" height="10" viewBox="0 0 9 10"><rect x="0" y="0" width="2" height="10" fill="#9aa1a8"/><path d="M8.5,0 L8.5,10 L2.5,5Z" fill="#9aa1a8"/></svg>
<svg class="r" style="left:318px;top:761px;" width="8" height="11" viewBox="0 0 8 11"><path d="M7.5,1 L7.5,10 L1,5.5Z" fill="#9aa1a8"/></svg>
<div class="t " style="left:350.59px;top:759.70px;font-size:14px;color:#fff;font-weight:normal;;transform:scaleX(0.7143);transform-origin:0 0">1</div>
<div class="t " style="left:374.00px;top:759.70px;font-size:14px;color:#1a5ca6;font-weight:normal;">2</div>
<svg class="r" style="left:405px;top:761px;" width="8" height="11" viewBox="0 0 8 11"><path d="M0.5,1 L0.5,10 L7,5.5Z" fill="#10192a"/></svg>
<svg class="r" style="left:443px;top:762px;" width="9" height="10" viewBox="0 0 9 10"><path d="M0.5,0 L0.5,10 L6.5,5Z" fill="#10192a"/><rect x="6.5" y="0" width="2" height="10" fill="#10192a"/></svg>
<div class="r" style="left:485px;top:752px;width:72px;height:30px;background:#fff;border-radius:6px"></div>
<div class="t " style="left:493.60px;top:759.60px;font-size:14px;color:#212529;font-weight:normal;">50</div>
<svg class="r" style="left:536px;top:763px;" width="10" height="7" viewBox="0 0 10 7"><path d="M0.5,0.5 L9.5,0.5 L5,6.5Z" fill="#0c1420"/></svg>
<div class="t " style="left:565.00px;top:761.55px;font-size:12.1px;color:#212529;font-weight:normal;">items per page</div>
<div class="r" style="left:240px;top:808px;width:950px;height:16px;background:#fafafa"></div>
<svg class="r" style="left:247px;top:812px;" width="9" height="10" viewBox="0 0 9 10"><path d="M8,0 L8,10 L0.5,5Z" fill="#8a8a8a"/></svg>
<div class="r" style="left:263px;top:812px;width:884px;height:9px;background:#8a8a8a;border-radius:5px"></div>
<svg class="r" style="left:1175px;top:812px;" width="9" height="10" viewBox="0 0 9 10"><path d="M1,0 L1,10 L8.5,5Z" fill="#8a8a8a"/></svg>
<div class="t " style="left:622.70px;top:831.50px;font-size:12px;color:#fff;font-weight:normal;letter-spacing:-0.1px">© 2025 - Gimmal Records - <u>Privacy</u></div>
<div class="r" style="left:726px;top:242px;width:33px;height:31px;background:#e0e3e7"></div>
<svg class="r" style="left:738.2px;top:249px;" width="6" height="16" viewBox="0 0 6 16"><circle cx="3" cy="3" r="1.6" fill="#10192a"/><circle cx="3" cy="8" r="1.6" fill="#10192a"/><circle cx="3" cy="13" r="1.6" fill="#10192a"/></svg>
<div class="r" style="left:724px;top:276px;width:250px;height:228px;background:#fff"></div>
<div class="r" style="left:724px;top:276px;width:1px;height:223px;background:#dee2e6"></div>
<div class="r" style="left:973px;top:276px;width:1px;height:228px;background:#dee2e6"></div>
<div class="r" style="left:727px;top:503px;width:243px;height:1px;background:#dee2e6"></div>
<div class="t " style="left:765.40px;top:292.35px;font-size:15.5px;color:#3b4656;font-weight:normal;;transform:scaleX(1.0125);transform-origin:0 0">Sort Ascending</div>
<div class="t " style="left:765.40px;top:324.05px;font-size:15.5px;color:#3b4656;font-weight:normal;;transform:scaleX(1.0099);transform-origin:0 0">Sort Descending</div>
<svg class="r" style="left:744px;top:294px;" width="9" height="12" viewBox="0 0 9 12"><path d="M4.5,1 L4.5,10.5 M2,3.5 L4.5,1 L7,3.5" fill="none" stroke="#3b4656" stroke-width="1.2"/></svg>
<svg class="r" style="left:744px;top:326px;" width="9" height="12" viewBox="0 0 9 12"><path d="M4.5,1 L4.5,10.5 M2,8 L4.5,10.5 L7,8" fill="none" stroke="#3b4656" stroke-width="1.2"/></svg>
<div class="r" style="left:725px;top:356px;width:248px;height:1px;background:#dee2e6"></div>
<div class="r" style="left:725px;top:365px;width:248px;height:32px;background:#e4e7eb"></div>
<svg class="r" style="left:743px;top:375px;" width="12" height="14" viewBox="0 0 12 14"><rect x="0" y="0" width="2.6" height="13" fill="#00a3ee"/><rect x="4.7" y="0" width="2.6" height="13" fill="#00a3ee"/><rect x="9.4" y="0" width="2.6" height="13" fill="#00a3ee"/></svg>
<div class="t " style="left:765.40px;top:373.15px;font-size:15.5px;color:#00a3ee;font-weight:normal;;transform:scaleX(0.9933);transform-origin:0 0">Columns</div>
<svg class="r" style="left:953px;top:377px;" width="7" height="9" viewBox="0 0 7 9"><path d="M0.5,0.5 L6.5,4.5 L0.5,8.5Z" fill="#00a3ee"/></svg>
<div class="r" style="left:725px;top:405px;width:248px;height:1px;background:#dee2e6"></div>
<svg class="r" style="left:741px;top:423px;" width="14" height="14" viewBox="0 0 14 14"><path d="M0.5,0.5 L13.5,0.5 L8.3,6.5 L8.3,13.5 L5.7,12 L5.7,6.5Z" fill="#3b4656"/></svg>
<div class="t " style="left:764.37px;top:422.15px;font-size:15.5px;color:#3b4656;font-weight:normal;;transform:scaleX(1.0306);transform-origin:0 0">Filter</div>
<svg class="r" style="left:953px;top:426px;" width="7" height="9" viewBox="0 0 7 9"><path d="M0.5,0.5 L6.5,4.5 L0.5,8.5Z" fill="#3b4656"/></svg>
<div class="r" style="left:725px;top:454px;width:248px;height:1px;background:#dee2e6"></div>
<svg class="r" style="left:741px;top:472px;" width="15" height="14" viewBox="0 0 15 14"><rect x="0.8" y="0.8" width="13.4" height="12.4" fill="none" stroke="#3b4656" stroke-width="1.6"/><rect x="0.8" y="0.8" width="4" height="12.4" fill="#3b4656"/><path d="M7,4 L12,4 M7,7 L12,7 M7,10 L12,10" stroke="#3b4656" stroke-width="1.3"/></svg>
<div class="t " style="left:765.40px;top:470.85px;font-size:15.5px;color:#3b4656;font-weight:normal;;transform:scaleX(1.0114);transform-origin:0 0">Set Column Position</div>
<svg class="r" style="left:953px;top:475px;" width="7" height="9" viewBox="0 0 7 9"><path d="M0.5,0.5 L6.5,4.5 L0.5,8.5Z" fill="#3b4656"/></svg>
<div class="r" style="left:1188px;top:760px;width:2px;height:3px;background:#10192a;border-radius:1px"></div>
<div class="r" style="left:1188px;top:771px;width:2px;height:3px;background:#10192a;border-radius:1px"></div>
<div class="r" style="left:973px;top:366px;width:216px;height:451px;background:#fff;border:1px solid #e3e6ea;border-radius:0 0 6px 0;box-shadow:0 3px 8px rgba(0,0,0,0.18)"></div>
<div class="r" style="left:974px;top:783px;width:214px;height:32px;background:#e3e6ea"></div>
<svg class="r" style="left:990px;top:374.5px;" width="16" height="16" viewBox="0 0 16 16"><rect x="0" y="0" width="16" height="16" rx="3" fill="#0b4d9b"/><path d="M4.2,8.2 L6.9,10.8 L11.8,5.6" fill="none" stroke="#fff" stroke-width="2" stroke-linecap="round" stroke-linejoin="round"/></svg>
<div class="t " style="left:1014.50px;top:374.75px;font-size:15.5px;color:#131c2b;font-weight:normal;;transform:scaleX(1.0345);transform-origin:0 0">Approved</div>
<svg class="r" style="left:990px;top:406.5px;" width="16" height="16" viewBox="0 0 16 16"><rect x="0" y="0" width="16" height="16" rx="3" fill="#0b4d9b"/><path d="M4.2,8.2 L6.9,10.8 L11.8,5.6" fill="none" stroke="#fff" stroke-width="2" stroke-linecap="round" stroke-linejoin="round"/></svg>
<div class="t " style="left:1013.55px;top:406.75px;font-size:15.5px;color:#131c2b;font-weight:normal;;transform:scaleX(0.9547);transform-origin:0 0">Record Class</div>
<svg class="r" style="left:990px;top:438.5px;" width="16" height="16" viewBox="0 0 16 16"><rect x="0" y="0" width="16" height="16" rx="3" fill="#0b4d9b"/><path d="M4.2,8.2 L6.9,10.8 L11.8,5.6" fill="none" stroke="#fff" stroke-width="2" stroke-linecap="round" stroke-linejoin="round"/></svg>
<div class="t " style="left:1013.52px;top:438.75px;font-size:15.5px;color:#131c2b;font-weight:normal;;transform:scaleX(0.9816);transform-origin:0 0">Record / Case File</div>
<svg class="r" style="left:990px;top:470.5px;" width="16" height="16" viewBox="0 0 16 16"><rect x="0" y="0" width="16" height="16" rx="3" fill="#0b4d9b"/><path d="M4.2,8.2 L6.9,10.8 L11.8,5.6" fill="none" stroke="#fff" stroke-width="2" stroke-linecap="round" stroke-linejoin="round"/></svg>
<div class="t " style="left:1014.50px;top:470.75px;font-size:15.5px;color:#131c2b;font-weight:normal;;transform:scaleX(0.9713);transform-origin:0 0">Source</div>
<svg class="r" style="left:990px;top:502.5px;" width="16" height="16" viewBox="0 0 16 16"><rect x="0" y="0" width="16" height="16" rx="3" fill="#0b4d9b"/><path d="M4.2,8.2 L6.9,10.8 L11.8,5.6" fill="none" stroke="#fff" stroke-width="2" stroke-linecap="round" stroke-linejoin="round"/></svg>
<div class="t " style="left:1013.56px;top:502.75px;font-size:15.5px;color:#131c2b;font-weight:normal;;transform:scaleX(0.9450);transform-origin:0 0">Phase</div>
<svg class="r" style="left:990px;top:534.5px;" width="16" height="16" viewBox="0 0 16 16"><rect x="0" y="0" width="16" height="16" rx="3" fill="#0b4d9b"/><path d="M4.2,8.2 L6.9,10.8 L11.8,5.6" fill="none" stroke="#fff" stroke-width="2" stroke-linecap="round" stroke-linejoin="round"/></svg>
<div class="t " style="left:1014.50px;top:534.75px;font-size:15.5px;color:#131c2b;font-weight:normal;;transform:scaleX(1.0434);transform-origin:0 0">Action</div>
<svg class="r" style="left:990px;top:566.5px;" width="16" height="16" viewBox="0 0 16 16"><rect x="0" y="0" width="16" height="16" rx="3" fill="#0b4d9b"/><path d="M4.2,8.2 L6.9,10.8 L11.8,5.6" fill="none" stroke="#fff" stroke-width="2" stroke-linecap="round" stroke-linejoin="round"/></svg>
<div class="t " style="left:1013.48px;top:566.75px;font-size:15.5px;color:#131c2b;font-weight:normal;;transform:scaleX(1.0222);transform-origin:0 0">Expiration</div>
<svg class="r" style="left:990px;top:598.5px;" width="16" height="16" viewBox="0 0 16 16"><rect x="0" y="0" width="16" height="16" rx="3" fill="#0b4d9b"/><path d="M4.2,8.2 L6.9,10.8 L11.8,5.6" fill="none" stroke="#fff" stroke-width="2" stroke-linecap="round" stroke-linejoin="round"/></svg>
<div class="t " style="left:1013.49px;top:598.75px;font-size:15.5px;color:#131c2b;font-weight:normal;;transform:scaleX(1.0056);transform-origin:0 0">@sp.library</div>
<svg class="r" style="left:990px;top:630.5px;" width="16" height="16" viewBox="0 0 16 16"><rect x="0" y="0" width="16" height="16" rx="3" fill="#0b4d9b"/><path d="M4.2,8.2 L6.9,10.8 L11.8,5.6" fill="none" stroke="#fff" stroke-width="2" stroke-linecap="round" stroke-linejoin="round"/></svg>
<div class="t " style="left:1013.47px;top:630.75px;font-size:15.5px;color:#131c2b;font-weight:normal;;transform:scaleX(1.0270);transform-origin:0 0">@sp.title</div>
<svg class="r" style="left:990px;top:662.5px;" width="16" height="16" viewBox="0 0 16 16"><rect x="0" y="0" width="16" height="16" rx="3" fill="#0b4d9b"/><path d="M4.2,8.2 L6.9,10.8 L11.8,5.6" fill="none" stroke="#fff" stroke-width="2" stroke-linecap="round" stroke-linejoin="round"/></svg>
<div class="t " style="left:1013.48px;top:662.75px;font-size:15.5px;color:#131c2b;font-weight:normal;;transform:scaleX(1.0240);transform-origin:0 0">@sp.folder</div>
<svg class="r" style="left:990px;top:694.5px;" width="16" height="16" viewBox="0 0 16 16"><rect x="0" y="0" width="16" height="16" rx="3" fill="#0b4d9b"/><path d="M4.2,8.2 L6.9,10.8 L11.8,5.6" fill="none" stroke="#fff" stroke-width="2" stroke-linecap="round" stroke-linejoin="round"/></svg>
<div class="t " style="left:1013.46px;top:694.75px;font-size:15.5px;color:#131c2b;font-weight:normal;;transform:scaleX(1.0423);transform-origin:0 0">@box.folderpath</div>
<div class="r" style="left:990px;top:726.5px;width:16px;height:16px;background:#fff;border:1px solid #dfe3e8;border-radius:3px"></div>
<div class="t " style="left:1013.44px;top:726.75px;font-size:15.5px;color:#131c2b;font-weight:normal;;transform:scaleX(1.0591);transform-origin:0 0">@modified</div>
<div class="r" style="left:990px;top:758.5px;width:16px;height:16px;background:#fff;border:1px solid #dfe3e8;border-radius:3px"></div>
<div class="t " style="left:1012.70px;top:758.75px;font-size:15.5px;color:#131c2b;font-weight:normal;;transform:scaleX(1.0290);transform-origin:0 0">Title</div>
<div class="r" style="left:990px;top:790.5px;width:16px;height:16px;background:#fff;border:1px solid #dfe3e8;border-radius:3px"></div>
<div class="t " style="left:1013.44px;top:790.75px;font-size:15.5px;color:#00a3ee;font-weight:normal;;transform:scaleX(1.0553);transform-origin:0 0">My Column</div>
<div class="r" style="left:723px;top:239px;width:39px;height:37px;border:3px solid #ef4444;box-shadow:0 1px 5px rgba(0,0,0,0.45), inset 0 1px 5px rgba(0,0,0,0.35)"></div>
<div class="r" style="left:936px;top:362px;width:39px;height:38px;border:3px solid #ef4444;box-shadow:0 1px 5px rgba(0,0,0,0.45), inset 0 1px 5px rgba(0,0,0,0.35)"></div>
<div class="r" style="left:975px;top:782px;width:201px;height:34px;border:3px solid #ef4444;box-shadow:0 1px 5px rgba(0,0,0,0.45), inset 0 1px 5px rgba(0,0,0,0.35)"></div>
</div></body></html>
